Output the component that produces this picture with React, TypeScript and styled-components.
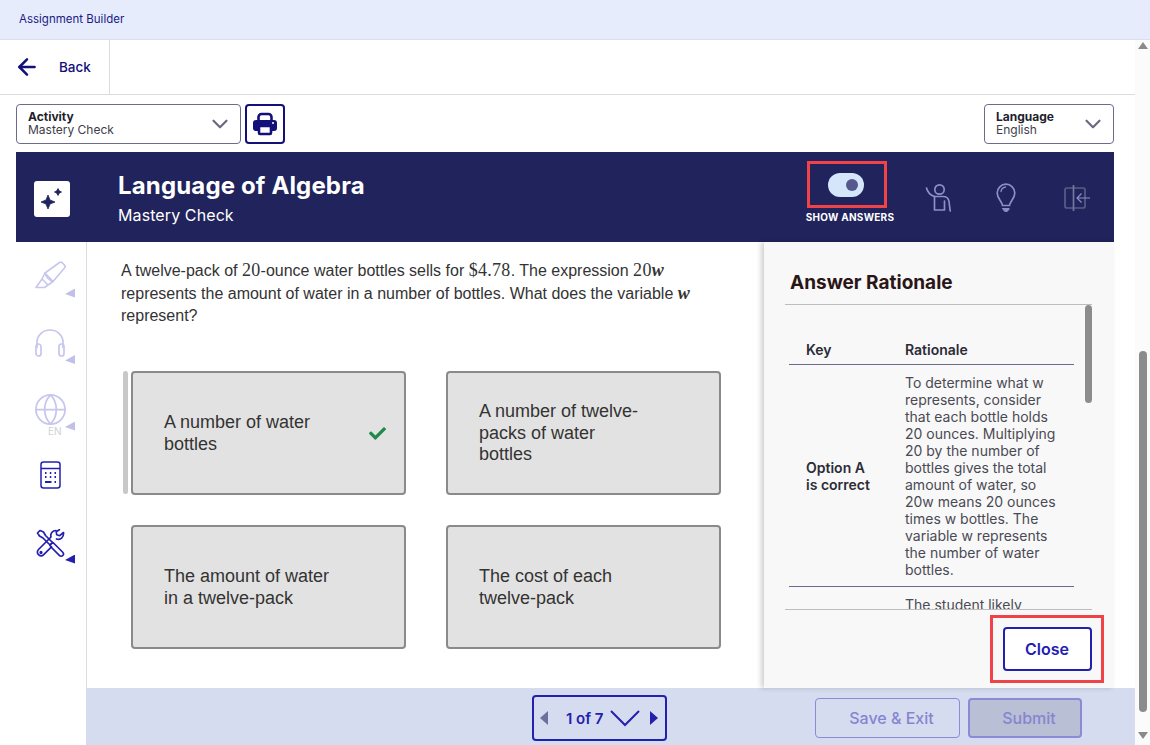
import React from 'react';
import styled, { createGlobalStyle } from 'styled-components';
import { ArrowLeft, ChevronDown, Globe } from 'lucide-react';
import { FaCheck } from 'react-icons/fa';

const GlobalStyle = createGlobalStyle`
  html, body {
    margin: 0;
    height: 100%;
    overflow: hidden;
    background: #fff;
    font-family: Inter, "Liberation Sans", sans-serif;
  }
  * { box-sizing: border-box; }
`;

const Page = styled.div`
  width: 1150px;
  height: 745px;
  display: flex;
  flex-direction: column;
`;
const TopBar = styled.div`
  height: 40px;
  flex: none;
  display: flex;
  align-items: center;
  padding: 0 0 2px 19px;
  background: #e6ecfc;
  border-bottom: 1px solid #dcdfe8;
  font-size: 11.5px;
  color: #1c1a86;
`;
const Shell = styled.div`
  flex: 1;
  min-height: 0;
  display: flex;
`;
const Main = styled.div`
  flex: 1;
  min-width: 0;
  display: flex;
  flex-direction: column;
`;
const ScrollTrack = styled.div`
  width: 15px;
  flex: none;
  background: #fbfbfb;
  display: flex;
  flex-direction: column;
  align-items: center;
  padding-top: 2px;
`;
const ScrollArrow = styled.div<{ $down?: boolean }>`
  width: 0;
  height: 0;
  margin-left: 1px;
  margin-top: ${(p) => (p.$down ? '20px' : '0')};
  border-left: 5px solid transparent;
  border-right: 5px solid transparent;
  border-bottom: ${(p) => (p.$down ? 'none' : '7px solid #8a8a8a')};
  border-top: ${(p) => (p.$down ? '7px solid #8a8a8a' : 'none')};
`;
const ScrollThumb = styled.div`
  width: 8px;
  height: 361px;
  margin: 302px 0 0 1px;
  border-radius: 4px;
  background: #8c8c8c;
`;
const BackRow = styled.div`
  height: 55px;
  flex: none;
  display: flex;
  border-bottom: 1px solid #dcdcdc;
`;
const BackLink = styled.div`
  width: 110px;
  display: flex;
  align-items: center;
  padding: 0 0 1px 14px;
  gap: 19px;
  border-right: 1px solid #dcdcdc;
  font-size: 13.5px;
  font-weight: 500;
  color: #14107a;
`;
const Toolbar = styled.div`
  height: 57px;
  flex: none;
  display: flex;
  align-items: center;
  gap: 4px;
  padding: 0 21px 0 16px;
`;
const SelectBox = styled.div<{ $width: number; $push?: boolean }>`
  width: ${(p) => p.$width}px;
  height: 40px;
  margin-left: ${(p) => (p.$push ? 'auto' : '0')};
  display: flex;
  align-items: center;
  justify-content: space-between;
  padding: 0 7px 0 11px;
  border: 1px solid #6d6a8c;
  border-radius: 4px;
  color: #6b6880;
`;
const SelectText = styled.div`
  padding-bottom: 2px;
  font-size: 12px;
  line-height: 13px;
  color: #3d3d4a;
  b {
    display: block;
    font-weight: 700;
    color: #1e1e2c;
  }
`;
const PrintButton = styled.button`
  width: 40px;
  height: 40px;
  padding: 0;
  display: flex;
  align-items: center;
  justify-content: center;
  background: #fff;
  border: 2px solid #14107a;
  border-radius: 4px;
`;
const Banner = styled.div`
  height: 90px;
  flex: none;
  margin: 0 21px 0 16px;
  display: flex;
  align-items: center;
  padding: 0 3px 0 18px;
  background: #20235c;
  color: #fff;
`;
const SparkleBox = styled.div`
  width: 36px;
  height: 36px;
  display: flex;
  align-items: center;
  justify-content: center;
  margin: 3px 48px 0 0;
  border-radius: 3px;
  background: #fff;
`;
const BannerTitle = styled.div`
  flex: 1;
  padding-top: 2px;
  h1 {
    margin: 0 0 4px;
    font-size: 24px;
    line-height: 30px;
    font-weight: 700;
    letter-spacing: 0.15px;
  }
  p {
    margin: 0;
    font-size: 16px;
    line-height: 20px;
    letter-spacing: 0.1px;
  }
`;
const AnswerToggle = styled.div`
  width: 92px;
  align-self: flex-start;
  display: flex;
  flex-direction: column;
  align-items: center;
  gap: 3px;
  margin: 9px 11px 0 0;
`;
const ToggleLabel = styled.span`
  margin-left: 6px;
  font-size: 10px;
  line-height: 12px;
  font-weight: 700;
  letter-spacing: 0.25px;
  white-space: nowrap;
`;
const ToggleFrame = styled.div`
  width: 80px;
  height: 47px;
  display: flex;
  align-items: center;
  justify-content: center;
  padding-right: 2px;
  border: 3px solid #f04347;
`;
const ToggleTrack = styled.div`
  width: 36px;
  height: 24px;
  display: flex;
  align-items: center;
  justify-content: flex-end;
  padding-right: 6px;
  border-radius: 12px;
  background: #d5e6fa;
  &::after {
    content: '';
    width: 12px;
    height: 12px;
    border-radius: 50%;
    background: #55578f;
  }
`;
const BannerIcon = styled.div<{ $dim?: boolean }>`
  width: 68px;
  display: flex;
  justify-content: center;
  margin-top: 2px;
  margin-left: ${(p) => (p.$dim ? '3px' : '0')};
`;
const Body = styled.div`
  flex: 1;
  min-height: 0;
  display: flex;
  padding-left: 16px;
`;
const Rail = styled.div`
  width: 71px;
  flex: none;
  height: 446px;
  border-right: 1px solid #dcdcdc;
`;
const RailItem = styled.div<{ $faded?: boolean; $low?: number }>`
  position: relative;
  height: 66.5px;
  display: flex;
  align-items: center;
  justify-content: center;
  padding-right: 2px;
  padding-top: ${(p) => p.$low ?? 0}px;
  color: ${(p) => (p.$faded ? '#c6c6ee' : '#2320b0')};
`;
const Caret = styled.span<{ $faded?: boolean }>`
  position: absolute;
  right: 11px;
  bottom: 11px;
  width: 10px;
  height: 9px;
  background: ${(p) => (p.$faded ? '#c0c0ea' : '#2320b0')};
  clip-path: polygon(100% 0, 100% 100%, 0 62%);
`;
const EnTag = styled.span`
  position: absolute;
  left: 32px;
  bottom: 6px;
  font-size: 10px;
  line-height: 10px;
  color: #d0d0d8;
`;
const Stage = styled.div`
  flex: 1;
  min-width: 0;
  display: flex;
  flex-direction: column;
`;
const WorkRow = styled.div`
  height: 446px;
  flex: none;
  display: flex;
  padding-right: 21px;
`;
const Question = styled.div`
  flex: 1;
  min-width: 0;
  padding: 18px 0 0 34px;
`;
const Prompt = styled.p`
  width: 600px;
  margin: 0;
  font-family: "Liberation Sans", Arial, sans-serif;
  font-size: 16px;
  line-height: 22.5px;
  color: #333;
`;
const Math = styled.span`
  font-family: "Liberation Serif", serif;
  font-size: 18px;
  line-height: 0;
  letter-spacing: 0.3px;
  i { font-weight: 700; }
`;
const OptionGrid = styled.div`
  position: relative;
  display: grid;
  grid-template-columns: 275px 275px;
  grid-auto-rows: 124px;
  gap: 30px 40px;
  margin: 43.5px 0 0 10px;
`;
const GridThumb = styled.div`
  position: absolute;
  left: -8px;
  top: 0;
  width: 5px;
  height: 123px;
  border-radius: 3px;
  background: #c8c8c8;
`;
const Option = styled.div`
  display: flex;
  align-items: center;
  justify-content: space-between;
  padding: 1px 18px 0 31px;
  background: #e2e2e2;
  border: 2px solid #8a8a8a;
  border-radius: 4px;
  font-family: "Liberation Sans", Arial, sans-serif;
  font-size: 18px;
  line-height: 21.5px;
  color: #333;
  svg { flex: none; color: #1f8a4c; }
`;
const OptionText = styled.span<{ $width: number }>`
  width: ${(p) => p.$width}px;
`;
const Panel = styled.aside`
  width: 350px;
  flex: none;
  display: flex;
  flex-direction: column;
  background: #f8f8f8;
  box-shadow: -3px 0 5px rgba(0, 0, 0, 0.18);
  z-index: 1;
`;
const PanelTitle = styled.h2`
  height: 63px;
  flex: none;
  margin: 0 22px 0 21px;
  padding: 29px 0 0 5px;
  font-size: 19px;
  line-height: 24px;
  font-weight: 700;
  color: #2a1616;
  border-bottom: 1px solid #bdbdbd;
`;
const TableClip = styled.div`
  position: relative;
  height: 305px;
  flex: none;
  margin: 0 22px 0 21px;
  overflow: hidden;
  border-bottom: 1px solid #bdbdbd;
`;
const TableThumb = styled.div`
  position: absolute;
  right: 0;
  top: 0;
  width: 7px;
  height: 98px;
  border-radius: 4px;
  background: #8c8c8c;
`;
const TableRow = styled.div<{ $head?: boolean; $plain?: boolean }>`
  width: 285px;
  margin-left: 4px;
  display: grid;
  grid-template-columns: 99px 1fr;
  padding-left: 17px;
  font-size: 14px;
  line-height: 17px;
  color: ${(p) => (p.$head ? '#2c2c36' : '#4a4a54')};
  font-weight: ${(p) => (p.$head ? 600 : 400)};
  height: ${(p) => (p.$head ? '60px' : 'auto')};
  align-items: ${(p) => (p.$head ? 'end' : 'center')};
  padding-top: ${(p) => (p.$head ? '0' : '9px')};
  padding-bottom: ${(p) => (p.$head ? '6px' : '8px')};
  border-bottom: ${(p) => (p.$plain ? 'none' : '1px solid #6d6a8c')};
`;
const KeyCell = styled.div`
  font-weight: 600;
  color: #2c2c36;
`;
const RationaleCell = styled.div`
  width: 155px;
`;
const PanelFoot = styled.div`
  flex: 1;
  display: flex;
  align-items: center;
  justify-content: flex-end;
  padding: 0 10px 0 0;
`;
const CloseFrame = styled.div`
  width: 114px;
  height: 68px;
  display: flex;
  align-items: center;
  justify-content: center;
  border: 3px solid #f04347;
`;
const CloseButton = styled.button`
  width: 89px;
  height: 44px;
  background: #fff;
  border: 2px solid #2320b0;
  border-radius: 4px;
  font: 600 16px Inter, sans-serif;
  color: #2320b0;
`;
const Footer = styled.div`
  flex: 1;
  display: flex;
  align-items: center;
  margin-left: -1px;
  padding: 3px 53px 0 446px;
  background: #d6dcef;
`;
const Pager = styled.div`
  width: 135px;
  height: 46px;
  display: flex;
  align-items: center;
  padding-left: 6px;
  border: 2px solid #2320b0;
  border-radius: 4px;
  font-size: 15px;
  font-weight: 600;
  color: #2320b0;
  white-space: nowrap;
`;
const PagerTip = styled.span<{ $dir: 'left' | 'right' }>`
  width: 0;
  height: 0;
  border-top: 7px solid transparent;
  border-bottom: 7px solid transparent;
  border-left: ${(p) => (p.$dir === 'right' ? '8px solid #2320b0' : 'none')};
  border-right: ${(p) => (p.$dir === 'left' ? '8px solid #6f6f9c' : 'none')};
`;
const PagerLabel = styled.span`
  margin: 0 6px 0 18px;
`;
const PagerChevron = styled.svg`
  margin-right: 10px;
`;
const FootButton = styled.button<{ $solid?: boolean }>`
  width: ${(p) => (p.$solid ? '114px' : '145px')};
  height: 40px;
  margin-left: ${(p) => (p.$solid ? '8px' : 'auto')};
  padding: 0 0 0 8px;
  background: ${(p) => (p.$solid ? '#b9bfd4' : 'transparent')};
  border: ${(p) => (p.$solid ? '2px' : '1px')} solid #8a8ad6;
  border-radius: 4px;
  font: 500 16px Inter, sans-serif;
  color: #8585cf;
`;

const PrinterIcon = () => (
  <svg width="24" height="24" viewBox="0 0 24 24">
    <path d="M5.5 9V5a3 3 0 0 1 3-3h7a3 3 0 0 1 3 3v4" fill="none" stroke="#14107a" strokeWidth="2.6" />
    <rect x="0" y="8" width="24" height="11" rx="3" fill="#14107a" />
    <rect x="6" y="14" width="12" height="8" rx="1" fill="#fff" stroke="#14107a" strokeWidth="2.6" />
    <circle cx="20" cy="11" r="1" fill="#fff" />
  </svg>
);

const SparkleIcon = () => (
  <svg width="24" height="24" viewBox="0 0 24 24" fill="#20235c" stroke="#20235c" strokeWidth="0.8" strokeLinejoin="round">
    <path d="M8 8 10 13 15 15 10 17 8 22 6 17 1 15 6 13Z" />
    <path d="M18 1.500 19.200 3.800 21.500 5 19.200 6.200 18 8.500 16.800 6.200 14.500 5 16.800 3.800Z" />
  </svg>
);

const PersonIcon = () => (
  <svg width="27" height="30" viewBox="0 0 27 30" fill="none" stroke="#8d90c4" strokeWidth="1.7" strokeLinecap="round" strokeLinejoin="round">
    <circle cx="14.500" cy="6.500" r="4.700" />
    <path d="M1.500 5c1 4 3.500 7 8 8.500h8.500c3.500 0 5.500 1.500 6 5l1.200 9.500" />
    <path d="M9.500 13.500v13.500h10v-9" />
  </svg>
);

const BulbIcon = () => (
  <svg width="20" height="30" viewBox="0 0 20 30" fill="none" stroke="#8d90c4" strokeWidth="1.700" strokeLinecap="round">
    <path d="M6.500 22.500C6 18 1.200 15.500 1.200 10a8.800 8.800 0 0 1 17.600 0c0 5.500-4.800 8-5.300 12.500z" />
    <path d="M5 8.500c.3-2.500 2-4 4.500-4.500" strokeWidth="1.300" />
    <path d="M6.800 25.500h6.400c-.5 2-1.700 3-3.200 3s-2.700-1-3.200-3z" fill="#8d90c4" strokeWidth="1" />
  </svg>
);

const ExitIcon = () => (
  <svg width="27" height="28" viewBox="0 0 27 28" fill="none" stroke="#5b5d83" strokeWidth="1.700">
    <rect x="1" y="4" width="20" height="20" rx="2" />
    <path d="M9.500 1v26" stroke="#75779f" />
    <path d="M26 14H13M17.500 9.500 13 14l4.500 4.500" stroke="#8d90c4" strokeWidth="1.200" />
  </svg>
);

const HighlighterIcon = () => (
  <svg width="31" height="29" viewBox="0 0 31 29" fill="none" stroke="currentColor" strokeWidth="1.600" strokeLinejoin="round">
    <path d="M10 12 24.500 1.500c1-.7 1.800-.6 2.500.1l2.700 2.700c.7.800.7 1.700 0 2.500L18 20.500z" />
    <path d="M10 12c1 3.500 4 7 8 8.500l-5 3.500-6-6z" />
    <path d="M7 18 1 26.500h8.500L13 24" />
  </svg>
);

const HeadphonesIcon = () => (
  <svg width="30" height="28" viewBox="0 0 30 28" fill="none" stroke="currentColor" strokeWidth="1.700">
    <path d="M2 19v-6a13 12 0 0 1 26 0v6" />
    <rect x="1" y="15" width="5" height="12" rx="2.500" />
    <rect x="24" y="15" width="5" height="12" rx="2.500" />
  </svg>
);

const CalculatorIcon = () => (
  <svg width="21" height="28" viewBox="0 0 21 28" fill="none" stroke="currentColor" strokeWidth="1.500">
    <rect x="1" y="1" width="19" height="26" rx="2.500" />
    <path d="M1 7.500h19" />
    <path d="M5 12h1.500M9.800 12h1.500M14.500 12h1.500M5 16h1.500M9.800 16h1.500M14.500 16h1.500M14.500 21h1.500M5 21h6.500" strokeWidth="1.900" />
  </svg>
);

const ToolsIcon = () => (
  <svg width="29" height="29" viewBox="0 0 29 29" fill="none" stroke="currentColor" strokeWidth="1.700" strokeLinejoin="round" strokeLinecap="round">
    <path d="M1.500 4 4 1.500l3.500 1.500 2 3.500 7 7-2.500 2.500-7-7-3.500-2z" />
    <path d="m14 16 2.500-2.500 1.500 1 8.500 8.500c1.300 1.300 1.300 2.500.3 3.500s-2.400 1-3.500-.2L15 18z" />
    <path d="M20 1.500c-3.500 0-6 3-5 6.500L2.500 20.500c-1.500 1.500-1.500 3.800 0 5.200s3.700 1.500 5.200 0l7.800-7.800" />
    <path d="M20.500 10c3.800 1.500 7.500-1.500 7-6.500l-3.800 3.200-3-1 -.5-3 3.200-2" />
    <circle cx="5" cy="23.500" r=".8" />
  </svg>
);

const App: React.FC = () => {
  return (
    <Page>
      <GlobalStyle />
      <TopBar>Assignment Builder</TopBar>
      <Shell>
        <Main>
          <BackRow>
            <BackLink>
              <ArrowLeft size={26} strokeWidth={2.3} />
              Back
            </BackLink>
          </BackRow>
          <Toolbar>
            <SelectBox $width={225}>
              <SelectText>
                <b>Activity</b>
                Mastery Check
              </SelectText>
              <ChevronDown size={26} strokeWidth={2} />
            </SelectBox>
            <PrintButton aria-label="Print">
              <PrinterIcon />
            </PrintButton>
            <SelectBox $width={130} $push>
              <SelectText>
                <b>Language</b>
                English
              </SelectText>
              <ChevronDown size={26} strokeWidth={2} />
            </SelectBox>
          </Toolbar>
          <Banner>
            <SparkleBox>
              <SparkleIcon />
            </SparkleBox>
            <BannerTitle>
              <h1>Language of Algebra</h1>
              <p>Mastery Check</p>
            </BannerTitle>
            <AnswerToggle>
              <ToggleFrame>
                <ToggleTrack />
              </ToggleFrame>
              <ToggleLabel>SHOW ANSWERS</ToggleLabel>
            </AnswerToggle>
            <BannerIcon>
              <PersonIcon />
            </BannerIcon>
            <BannerIcon>
              <BulbIcon />
            </BannerIcon>
            <BannerIcon $dim>
              <ExitIcon />
            </BannerIcon>
          </Banner>
          <Body>
            <Rail>
              <RailItem $faded>
                <HighlighterIcon />
                <Caret $faded />
              </RailItem>
              <RailItem $faded $low={2}>
                <HeadphonesIcon />
                <Caret $faded />
              </RailItem>
              <RailItem $faded $low={2}>
                <Globe size={35} strokeWidth={1.2} />
                <EnTag>EN</EnTag>
                <Caret $faded />
              </RailItem>
              <RailItem>
                <CalculatorIcon />
              </RailItem>
              <RailItem $low={4}>
                <ToolsIcon />
                <Caret />
              </RailItem>
            </Rail>
            <Stage>
              <WorkRow>
                <Question>
                  <Prompt>
                    A twelve-pack of <Math>20</Math>-ounce water bottles sells for <Math>$4.78</Math>. The expression{' '}
                    <Math>
                      20<i>w</i>
                    </Math>{' '}
                    represents the amount of water in a number of bottles. What does the variable{' '}
                    <Math>
                      <i>w</i>
                    </Math>{' '}
                    represent?
                  </Prompt>
                  <OptionGrid>
                    <GridThumb />
                    <Option>
                      <OptionText $width={170}>A number of water bottles</OptionText>
                      <FaCheck size={17} />
                    </Option>
                    <Option>
                      <OptionText $width={165}>A number of twelve-packs of water bottles</OptionText>
                    </Option>
                    <Option>
                      <OptionText $width={175}>The amount of water in a twelve-pack</OptionText>
                    </Option>
                    <Option>
                      <OptionText $width={150}>The cost of each twelve-pack</OptionText>
                    </Option>
                  </OptionGrid>
                </Question>
                <Panel>
                  <PanelTitle>Answer Rationale</PanelTitle>
                  <TableClip>
                    <TableThumb />
                    <TableRow $head>
                      <div>Key</div>
                      <div>Rationale</div>
                    </TableRow>
                    <TableRow>
                      <KeyCell>
                        Option A
                        <br />
                        is correct
                      </KeyCell>
                      <RationaleCell>
                        To determine what w represents, consider that each bottle holds 20 ounces. Multiplying 20 by the
                        number of bottles gives the total amount of water, so 20w means 20 ounces times w bottles. The
                        variable w represents the number of water bottles.
                      </RationaleCell>
                    </TableRow>
                    <TableRow $plain>
                      <div />
                      <RationaleCell>The student likely</RationaleCell>
                    </TableRow>
                  </TableClip>
                  <PanelFoot>
                    <CloseFrame>
                      <CloseButton>Close</CloseButton>
                    </CloseFrame>
                  </PanelFoot>
                </Panel>
              </WorkRow>
              <Footer>
                <Pager>
                  <PagerTip $dir="left" />
                  <PagerLabel>1 of 7</PagerLabel>
                  <PagerChevron width="30" height="18" viewBox="0 0 30 18" fill="none" stroke="#2320b0" strokeWidth="2">
                    <path d="M1 2 15 16 29 2" />
                  </PagerChevron>
                  <PagerTip $dir="right" />
                </Pager>
                <FootButton>Save &amp; Exit</FootButton>
                <FootButton $solid>Submit</FootButton>
              </Footer>
            </Stage>
          </Body>
        </Main>
        <ScrollTrack>
          <ScrollArrow />
          <ScrollThumb />
          <ScrollArrow $down />
        </ScrollTrack>
      </Shell>
    </Page>
  );
};

export default App;
